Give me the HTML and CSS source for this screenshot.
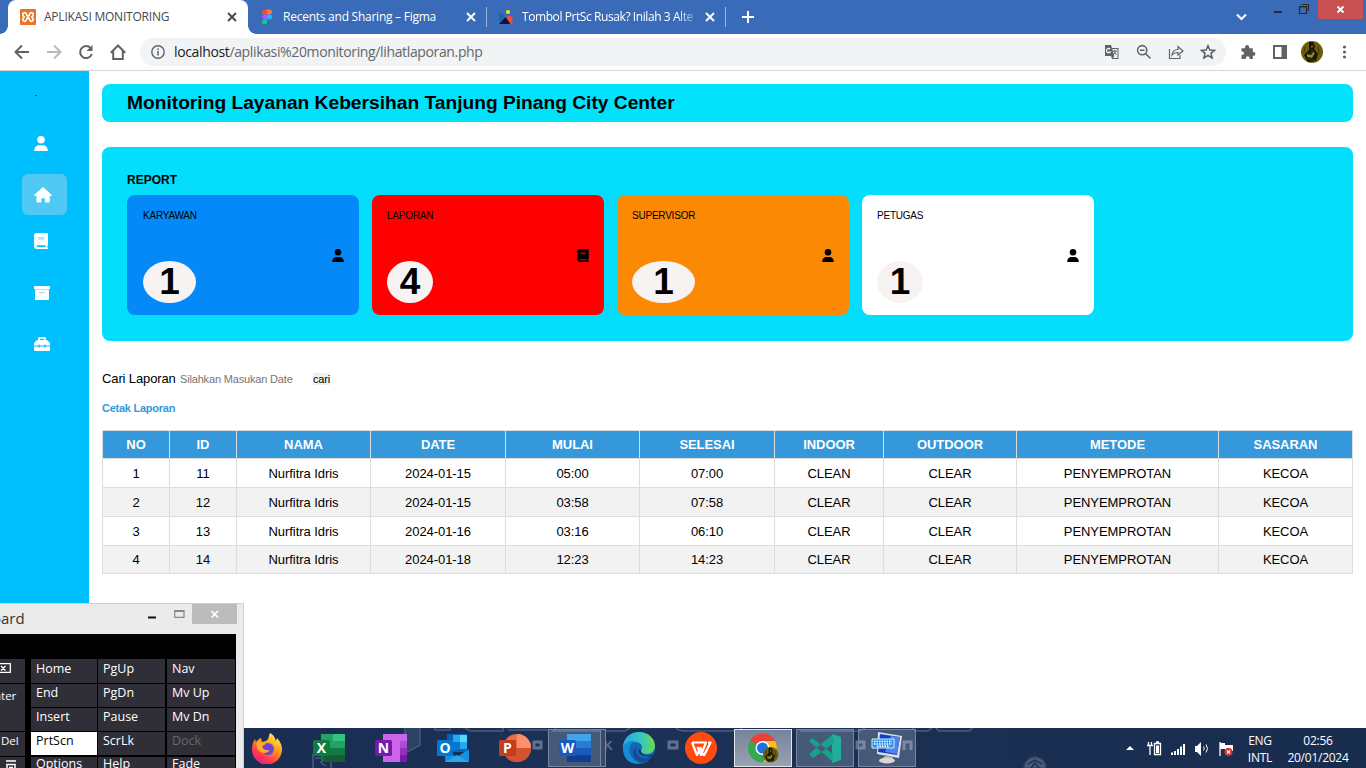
FILE: index.html
```html
<!DOCTYPE html>
<html lang="id">
<head>
<meta charset="utf-8">
<title>APLIKASI MONITORING</title>
<link rel="stylesheet" href="styles.css">
</head>
<body>
<svg class="defs" aria-hidden="true">
  <symbol id="x" viewBox="0 0 10 10"><path d="M1 1l8 8M9 1l-8 8" stroke="currentColor" stroke-width="1.9" fill="none"/></symbol>
  <symbol id="user" viewBox="0 0 14 15"><circle cx="7" cy="3.8" r="3.8"/><path d="M.2 15C.2 11 2.8 9.3 5 9.3h4c2.200 0 4.800 1.700 4.800 5.700z"/></symbol>
  <symbol id="book" viewBox="0 0 14 16"><path d="M2.600 0H13a1 1 0 0 1 1 1v11l-.6.600v1.600l.600.600V16H3a3 3 0 0 1-3-3V2.600A2.600 2.600 0 0 1 2.600 0z"/><path class="slit" d="M2.800 12.300h8.800v1.700H2.800z"/><path class="slot" d="M4.200 4h6.200v2.700H4.200z"/></symbol>
</svg>
<div class="screen">
  <header class="tabs">
    <div class="tab active">
      <svg class="fav" viewBox="0 0 16 16"><rect width="16" height="16" rx="1" fill="#e87424"/><path d="M4.500 3.600C7 3.300 6 7.200 8 7.200s1-3.900 3.500-3.600c2.500.4 2 3.200.4 4.400 1.600 1.200 2 4-.4 4.400C9 12.700 10 8.800 8 8.800s-1 3.900-3.500 3.600C2 12 2.500 9.200 4.100 8 2.500 6.800 2 4 4.500 3.600z" fill="none" stroke="#fff" stroke-width="1.700"/></svg>
      <span class="tab-title t1">APLIKASI MONITORING</span>
      <svg class="close"><use href="#x"/></svg>
    </div>
    <div class="tab">
      <svg class="fav" viewBox="0 0 16 16"><path d="M5.500.500H8v5H5.500a2.500 2.500 0 0 1 0-5z" fill="#f24e1e"/><path d="M8 .500h2.500a2.500 2.500 0 0 1 0 5H8z" fill="#ff7262"/><path d="M5.500 5.500H8v5H5.500a2.500 2.500 0 0 1 0-5z" fill="#a259ff"/><circle cx="10.500" cy="8" r="2.500" fill="#1abcfe"/><path d="M5.500 10.500H8V13a2.500 2.500 0 1 1-2.500-2.500z" fill="#0acf83"/></svg>
      <span class="tab-title t2">Recents and Sharing – Figma</span>
      <svg class="close"><use href="#x"/></svg>
    </div>
    <div class="tab third">
      <svg class="fav" viewBox="0 0 16 16"><path d="M1.500 3l5 4-5 6z" fill="#1565a9"/><path d="M11 6l3.500 2v7H12L8 9z" fill="#f04c38"/><path d="M7.500 8l5 7H1z" fill="#11133f"/><circle cx="10" cy="3" r="2.100" fill="#f6e316"/></svg>
      <span class="tab-title t3">Tombol PrtSc Rusak? Inilah 3 Alte</span>
      <svg class="close"><use href="#x"/></svg>
    </div>
    <svg class="plus" viewBox="0 0 12 12"><path d="M6 0v12M0 6h12" stroke="#fff" stroke-width="2"/></svg>
    <div class="winctl">
      <svg viewBox="0 0 140 34" width="140" height="34"><path d="M11 14.500l4.500 4.500 4.500-4.500" fill="none" stroke="#fff" stroke-width="2"/><path d="M48 11h8v2h-8z" fill="#2a2a2a"/><path d="M73.500 6.500h7V13.500h-7zM73 7h8M76 4.500h6.500V11" fill="none" stroke="#2a2a2a" stroke-width="1.200"/><path d="M92 0h45v19H92z" fill="#c75050"/><path d="M111.500 6.500l6 6m0-6l-6 6" stroke="#fff" stroke-width="1.800"/></svg>
    </div>
  </header>

  <nav class="toolbar">
    <span class="tool"><svg viewBox="0 0 16 16" class="line"><path d="M15 8H2M8 1.500L1.500 8 8 14.500"/></svg></span>
    <span class="tool off"><svg viewBox="0 0 16 16" class="line"><path d="M1 8h13M8 1.500L14.500 8 8 14.500"/></svg></span>
    <span class="tool"><svg viewBox="0 0 16 16" class="line"><path d="M13.800 10A6 6 0 1 1 12.700 4.200"/><path d="M14.500 1v6h-6z" fill="#5f6368" stroke="none"/></svg></span>
    <span class="tool"><svg viewBox="0 0 16 16" class="line"><path d="M.8 8.800L8 1.500l7.200 7.300M3.200 7v8h9.600V7"/></svg></span>
    <div class="omnibox">
      <svg viewBox="0 0 16 16" class="info"><circle cx="8" cy="8" r="6.200" fill="none" stroke="#5f6368" stroke-width="1.400"/><path d="M7.250 7h1.500v4.500h-1.500zM7.250 4.500h1.500V6h-1.500z"/></svg>
      <span class="url"><b>localhost</b>/aplikasi%20monitoring/lihatlaporan.php</span>
      <span class="tool"><svg viewBox="0 0 16 16"><path d="M1 1h6l1 3h6.500v11H8l-1-3H1z" fill="#5f6368"/><path d="M8.300 5h5.200v9H9.200l1-2.200z" fill="#f1f3f4"/><path d="M9 7h4m-2-1v1m-1.500 0l3 4m0-4l-3.500 4" stroke="#5f6368" stroke-width=".9" fill="none"/><path d="M6.200 5a2.200 2.200 0 1 0 .2 3H4.500" stroke="#fff" fill="none" stroke-width="1.100"/></svg></span>
      <span class="tool"><svg viewBox="0 0 16 16" class="line thin"><circle cx="6.200" cy="6.200" r="4.600"/><path d="M9.500 9.500l5 5M4 6.200h4.400"/></svg></span>
      <span class="tool"><svg viewBox="0 0 16 16" class="line fine"><path d="M1.500 5v9.500H12V11M4 11c.5-4 3-5.500 6-5.500V2.500l5 4.500-5 4V8.500C7 8.500 5.500 9 4 11z"/></svg></span>
      <span class="tool"><svg viewBox="0 0 16 16" class="line thin"><path d="M8 1.800l1.900 4.200 4.600.4-3.500 3 1.100 4.500L8 11.500l-4.100 2.400L5 9.400l-3.500-3 4.600-.4z"/></svg></span>
    </div>
    <span class="tool ext"><svg viewBox="0 0 16 16"><path d="M1.500 4.200h3.600V3a2 2 0 0 1 4 0v1.200h3.700V8h.7a1.900 1.900 0 0 1 0 3.800h-.7V15H9.600v-.8a1.900 1.900 0 0 0-3.800 0v.8H1.500v-4h.8a1.700 1.700 0 0 0 0-3.400h-.8z" fill="#5f6368"/></svg></span>
    <span class="tool"><svg viewBox="0 0 16 16"><path d="M1 1h14v14H1zM3 3v10h6.500V3z" fill-rule="evenodd" fill="#5f6368"/></svg></span>
    <span class="tool"><svg viewBox="0 0 22 22" class="avatar"><use href="#face"/></svg></span>
    <span class="tool"><svg viewBox="0 0 16 16"><circle cx="8.500" cy="3" r="1.600"/><circle cx="8.500" cy="8" r="1.600"/><circle cx="8.500" cy="13" r="1.600"/></svg></span>
  </nav>

  <div class="page">
    <aside class="side">
      <span class="speck"></span>
      <a class="s1"><svg width="14" height="15"><use href="#user"/></svg></a>
      <a class="on"><svg width="18" height="16" viewBox="0 0 18 16"><path d="M9 0l8.600 7.700c.5.500.2 1.200-.5 1.200h-1.300V14.600a1 1 0 0 1-1 1H11v-4.300H7.300v4.300H3.400a1 1 0 0 1-1-1V8.900H1C.2 8.900 0 8.200.4 7.700z"/></svg></a>
      <a class="s3"><svg width="14" height="16"><use href="#book"/></svg></a>
      <a class="s4"><svg width="16" height="14" viewBox="0 0 16 14"><path d="M.7 0h14.600a.7.7 0 0 1 .7.700V3H0V.7A.7.700 0 0 1 .7 0z"/><path d="M1 3h14v1H1z" class="slot"/><path d="M1 4h14v9a1 1 0 0 1-1 1H2a1 1 0 0 1-1-1z"/><path class="slot" d="M5.200 5.800h5.600v1.500H5.200z"/></svg></a>
      <a class="s5"><svg width="16" height="14" viewBox="0 0 16 14"><path fill-rule="evenodd" d="M4 3V1.500A1.500 1.500 0 0 1 5.500 0h5A1.500 1.500 0 0 1 12 1.500V3h1l3 3v2.500H0V6l3-3zm1.800-1.300V3h4.400V1.700z"/><path d="M0 9.500h16V13a1 1 0 0 1-1 1H1a1 1 0 0 1-1-1z"/><path d="M4.500 7.500h1.200v3.200H4.500zM10.300 7.500h1.200v3.200h-1.200z" fill="#00bfff"/></svg></a>
    </aside>
    <main>
      <h1>Monitoring Layanan Kebersihan Tanjung Pinang City Center</h1>
      <section class="report">
        <h2>REPORT</h2>
        <div class="cards">
          <div class="card blue"><div class="stat"><span>KARYAWAN</span><strong>1</strong></div><svg width="12" height="13"><use href="#user"/></svg></div>
          <div class="card red"><div class="stat s2"><span>LAPORAN</span><strong>4</strong></div><svg width="12" height="13"><use href="#book"/></svg></div>
          <div class="card orange"><div class="stat s3"><span>SUPERVISOR</span><strong>1</strong></div><svg width="12" height="13"><use href="#user"/></svg></div>
          <div class="card white"><div class="stat s2"><span>PETUGAS</span><strong>1</strong></div><svg width="12" height="13"><use href="#user"/></svg></div>
        </div>
      </section>
      <div class="search"><span class="lbl">Cari Laporan</span><span class="hint">Silahkan Masukan Date</span><span class="go">cari</span></div>
      <a class="print">Cetak Laporan</a>
      <table>
        <colgroup><col class="c1"><col class="c2"><col class="c3"><col class="c4"><col class="c5"><col class="c6"><col class="c7"><col class="c8"><col class="c9"><col class="c10"></colgroup>
        <thead><tr><th>NO</th><th>ID</th><th>NAMA</th><th>DATE</th><th>MULAI</th><th>SELESAI</th><th>INDOOR</th><th>OUTDOOR</th><th>METODE</th><th>SASARAN</th></tr></thead>
        <tbody>
          <tr><td>1</td><td>11</td><td>Nurfitra Idris</td><td>2024-01-15</td><td>05:00</td><td>07:00</td><td>CLEAN</td><td>CLEAR</td><td>PENYEMPROTAN</td><td>KECOA</td></tr>
          <tr><td>2</td><td>12</td><td>Nurfitra Idris</td><td>2024-01-15</td><td>03:58</td><td>07:58</td><td>CLEAR</td><td>CLEAR</td><td>PENYEMPROTAN</td><td>KECOA</td></tr>
          <tr><td>3</td><td>13</td><td>Nurfitra Idris</td><td>2024-01-16</td><td>03:16</td><td>06:10</td><td>CLEAR</td><td>CLEAR</td><td>PENYEMPROTAN</td><td>KECOA</td></tr>
          <tr><td>4</td><td>14</td><td>Nurfitra Idris</td><td>2024-01-18</td><td>12:23</td><td>14:23</td><td>CLEAR</td><td>CLEAR</td><td>PENYEMPROTAN</td><td>KECOA</td></tr>
        </tbody>
      </table>
    </main>
  </div>

  <footer class="taskbar">
    <svg class="wall" viewBox="0 0 1366 40" width="1366" height="40">
      <g fill="none" stroke="#4a5c7c" stroke-width="1.500"><path d="M405 0v25l15-8V0M435 0v2h15V0M465 0l5 3h33V0M508 2h40M556 0l-3 3h72l5-3M676 0c2 3 8 3 12 3h50l4-3M800 3h60l5-3M912 0l4 3h12l4-3M936 0l3 3h30l4-3"/><path d="M313 26v14M315 30h16v10M320 34l6 4"/></g>
      <path d="M406 0v24l13-8V0z" fill="#2e4266"/>
      <g fill="none" stroke="#5f7091" stroke-width="3"><path d="M534 14h7v6h-7zM669 14h8v6h-8zM857 14h7v6h-7zM904 22v-8h7v8"/></g>
      <g class="wall-text"><text x="604" y="22">K</text><text x="735" y="22">T</text><text x="781" y="22">E</text></g>
      <path d="M1024 40a11 11 0 0 1 22 0z" fill="#4a5c7c" stroke="#2f4469" stroke-width="2" stroke-dasharray="1 1"/><path d="M1028 36l7-4 7 4M1031 40l4-5 4 5" fill="none" stroke="#1b3055" stroke-width="1.500"/>
    </svg>
    <div class="apps">
      <span class="app"><svg viewBox="0 0 32 32"><defs><linearGradient id="ff" x1=".8" y1="0" x2=".2" y2="1"><stop offset="0" stop-color="#fff44f"/><stop offset=".4" stop-color="#ff9a1f"/><stop offset=".75" stop-color="#ff3750"/><stop offset="1" stop-color="#e21b9a"/></linearGradient></defs><path d="M19 1c4 2 5 5 6 8l1-3c3 3 5 7 5 11a15 15 0 0 1-30 1C1 13 2 10 4 7l1 3c1-2 3-3 5-4l1 4c3-1 5-1 6-3 1-2 1-4 2-6z" fill="url(#ff)"/><circle cx="17" cy="17" r="6" fill="#6b45d5"/><path d="M6 10c4-1 7 0 9 2l-4 2c1 4 4 5 8 4-2 3-6 4-9 2-4-2-5-6-4-10z" fill="#ffae26"/></svg></span>
      <span class="app"><svg viewBox="0 0 32 32"><path d="M8 2h24v28H8z" fill="#21a366"/><path d="M20 2h12v7H20z" fill="#33c481"/><path d="M8 16h12v14H8zM20 16h12v7H20z" fill="#107c41"/><path d="M10 23h22v7H10z" fill="#185c37"/><rect y="8" width="17" height="16" rx="1.500" fill="#107c41"/><text x="8.500" y="21">X</text></svg></span>
      <span class="app"><svg viewBox="0 0 32 32"><path d="M8 2h24v28H8z" fill="#ca64ea"/><path d="M25 9h7v7h-7z" fill="#ae4bd5"/><path d="M25 16h7v7h-7z" fill="#9332bf"/><path d="M25 23h7v7h-7z" fill="#7719aa"/><rect y="8" width="17" height="16" rx="1.500" fill="#7719aa"/><text x="8.500" y="21">N</text></svg></span>
      <span class="app"><svg viewBox="0 0 32 32"><path d="M10 2h20v18H10z" fill="#0364b8"/><path d="M16 3h7v7h-7zM23 10h7v7h-7z" fill="#28a8ea"/><path d="M23 3h7v7h-7z" fill="#50d9ff"/><path d="M10 10h13v8H10z" fill="#0078d4"/><path d="M8 18l12 7 12-8v13H8z" fill="#1490df"/><path d="M8 30l12-7 12 7z" fill="#28a8ea"/><rect y="8" width="16" height="16" rx="1.500" fill="#0078d4"/><text x="8" y="21">O</text></svg></span>
      <span class="app"><svg viewBox="0 0 32 32"><circle cx="18" cy="16" r="14" fill="#ed6c47"/><path d="M18 2a14 14 0 0 1 14 14H18z" fill="#ff8f6b"/><path d="M4 16h28a14 14 0 0 1-28 0z" fill="#d35230"/><rect y="8" width="17" height="16" rx="1.500" fill="#c43e1c"/><text x="8.500" y="21">P</text></svg></span>
      <span class="app open stack"><svg viewBox="0 0 32 32"><path d="M8 2h24v7H8z" fill="#41a5ee"/><path d="M8 9h24v7H8z" fill="#2b7cd3"/><path d="M8 16h24v7H8z" fill="#185abd"/><path d="M8 23h24v7H8z" fill="#103f91"/><rect y="8" width="17" height="16" rx="1.500" fill="#185abd"/><text x="8.500" y="21">W</text></svg></span>
      <span class="app"><svg viewBox="0 0 32 32"><defs><linearGradient id="eg"><stop offset="0" stop-color="#24a8e8"/><stop offset=".55" stop-color="#36c6c2"/><stop offset="1" stop-color="#68dd45"/></linearGradient></defs><circle cx="16" cy="16" r="16" fill="#1268b8"/><path d="M0 14C1 6 7 0 16 0c10 0 16 7 16 14 0 5-4 8-8 8-3 0-6-1-6-3 0-1 1-2 1-4 0-3-3-5-7-5-6 0-11 3-12 8z" fill="url(#eg)"/><path d="M0 17c0-5 6-9 12-8-5 2-7 7-5 13 2 5 6 8 11 9-10 3-18-4-18-14z" fill="#168bd6"/><path d="M14 15c-4 8 6 15 15 9-2 3-4 5-7 6-7 1-13-4-12-10 0-2 2-4 4-5z" fill="#154c91"/><path d="M17.500 17c0 7 7 8 13 5l-1 2c-8 2-14-2-14-5 0-1 1-2 2-2zM28 26l4-4v10h-9z" fill="#1a2f53"/></svg></span>
      <span class="app"><svg viewBox="0 0 32 32"><circle cx="16" cy="16" r="16" fill="#ff4a10"/><path d="M7 10.500h14L16 23l-3.500-8M7 10.500L12 23l3-7M15 15l3.500 8h.8L25.500 10.500H23" fill="none" stroke="#fff" stroke-width="2.200" stroke-linejoin="round"/></svg></span>
      <span class="app open current"><svg viewBox="0 0 32 32"><circle cx="15.500" cy="16" r="14.500" fill="#34a853"/><path d="M15.500 16L3 8.600A14.500 14.500 0 0 1 28 8.600L30 16z" fill="#ea4335"/><path d="M15.500 9H28c5 8-1 21-12 21.500L22 20z" fill="#fbc116"/><circle cx="15.500" cy="16" r="7" fill="#fff"/><circle cx="15.500" cy="16" r="5.500" fill="#1a73e8"/><g id="face" transform="translate(16 15) scale(.7)"><circle cx="11" cy="11" r="11" fill="#6b6008"/><path d="M8 1h4l2 4-1 3 4 5-2 7-8 1-4-7 5-5z" fill="#171608"/><path d="M11 4l1 1-1 2-1-1zM6 13l4 1 2-3 2 1-3 5-5-1z" fill="#9b851d"/><path d="M10 8l2 2-3 3M7 18l7 1M17 5l1 8M4 6l-1 5" stroke="#3d380b" fill="none"/></g></svg></span>
      <span class="app open"><svg viewBox="0 0 32 32"><path d="M23 2l9 3v23l-9 3z" fill="#25ad9c"/><path d="M24 2L0 22l4 4 21-15zM0 9l3-3 21 16v8z" fill="#17a28c"/></svg></span>
      <span class="app open"><svg viewBox="0 0 32 32"><path d="M7 0l24 4-3 22-22-4z" fill="#dce2ec"/><path d="M9 2l20 3-3 18-19-3z" fill="#123fc0"/><path d="M20 4l9 1-3 17-12-2z" fill="#4f83e8"/><path d="M15 23l7 2-1 4H9z" fill="#aaa"/><ellipse cx="16" cy="28.500" rx="8" ry="3" fill="#d8d8d5"/><path d="M1 7h22v9H1z" fill="#3292e0" stroke="#d5efff"/><path d="M3 9.500h18M3 12h18M6 14.300h12" stroke="#fff" stroke-width="1.400" stroke-dasharray="1.500 1"/></svg></span>
    </div>
    <div class="tray">
      <svg viewBox="0 0 110 20" width="110" height="20"><path d="M3 12h8L7 8z" fill="#fff"/><g fill="none" stroke="#fff" stroke-width="1.300"><path d="M31.500 5.500h6v11h-6zM33 4h3M25.500 4v3M28.500 4v3M24 7.500h6M27 8v9"/></g><path d="M33 7.500h3V15h-3z" fill="#fff"/><path d="M48 14.500h2V17h-2zM51 13h2v4h-2zM54 11h2v6h-2zM57 8.500h2V17h-2zM60 6h2v11h-2zM72 8h2l4-4v14l-4-4h-2zM97 5h5v6h-5zM102 7h8v6h-8z" fill="#fff"/><path d="M80.500 8.500q1.500 2 0 4M83 6.500q3 4 0 8" fill="none" stroke="#fff"/><path d="M97 4v14" stroke="#fff" stroke-width="1.300"/><circle cx="105.500" cy="14" r="4" fill="#d93025"/><path d="M103.800 12.300l3.400 3.400m0-3.400l-3.400 3.400" stroke="#fff" stroke-width="1.200"/></svg>
      <div class="lang"><span>ENG</span><span>INTL</span></div>
      <div class="clock"><span>02:56</span><span>20/01/2024</span></div>
    </div>
  </footer>

  <section class="osk">
    <div class="osk-title"><span>oard</span><svg viewBox="0 0 90 30" width="90" height="30"><path d="M0 12.500h8v2H0z" fill="#111"/><path d="M26.700 6.700h9.300v6.600h-9.300zM26.700 7.500H36" fill="none" stroke="#888" stroke-width="1.200"/><path d="M44 0h45v20H44z" fill="#bcbcbc"/><path d="M63.500 7l6.500 6.500M70 7l-6.500 6.500" stroke="#fff" stroke-width="1.700"/></svg></div>
    <div class="osk-body">
      <div class="frag">
        <span class="key"><svg viewBox="0 0 12 10" width="12" height="10"><path d="M0 .7h10.300v8.600H0M1 3l4.500 4.500M5.500 3L1 7.500" fill="none" stroke="#fff" stroke-width="1.300"/></svg></span>
        <span class="key enter">nter</span>
        <span class="key del">Del</span>
        <span class="key menu"><svg viewBox="0 0 10 11" width="10" height="11"><path d="M0 1h10M1 4.500h8V11H1zM3 7.500h4" fill="none" stroke="#fff" stroke-width="1.500"/></svg></span>
      </div>
      <div class="grid">
        <span class="key">Home</span><span class="key">PgUp</span><span class="key">Nav</span>
        <span class="key">End</span><span class="key">PgDn</span><span class="key">Mv Up</span>
        <span class="key">Insert</span><span class="key">Pause</span><span class="key">Mv Dn</span>
        <span class="key lit">PrtScn</span><span class="key">ScrLk</span><span class="key dim">Dock</span>
        <span class="key last">Options</span><span class="key last">Help</span><span class="key last">Fade</span>
      </div>
    </div>
  </section>
</div>
</body>
</html>
```
FILE: styles.css
```css
* { box-sizing: border-box; }
body { margin: 0; overflow: hidden; font-family: "Liberation Sans", Arial, sans-serif; }
svg { display: block; flex: none; }
.defs { position: absolute; width: 0; height: 0; }
.screen { position: relative; display: flex; flex-direction: column; width: 1366px; height: 768px; overflow: hidden; background: #fff; }

/* browser tabs */
.tabs { display: flex; align-items: center; height: 34px; padding-left: 8px; background: #396bb8; font-family: "Open Sans", "Noto Sans", sans-serif; }
.tab { display: flex; align-items: center; width: 239px; height: 34px; padding-left: 11px; padding-right: 11px; color: #fff; }
.tab.active { position: relative; width: 240px; padding-left: 12px; background: #fff; color: #45494d; border-radius: 8px 8px 0 0; }
.tab.active::before, .tab.active::after { content: ""; position: absolute; bottom: 0; width: 8px; height: 8px; }
.tab.active::before { left: -8px; background: radial-gradient(circle at 0 0, transparent 7.5px, #fff 8px); }
.tab.active::after { right: -8px; background: radial-gradient(circle at 100% 0, transparent 7.5px, #fff 8px); }
.tab:not(.active) { position: relative; }
.tab:not(.active)::after { content: ""; position: absolute; right: 0; top: 7px; width: 1px; height: 20px; background: #9bb5dc; }
.fav { width: 16px; height: 16px; margin-right: 8px; }
.tab-title { flex: 1; white-space: nowrap; font-size: 12px; line-height: 20px; }
.t1 { letter-spacing: -.22px; }
.t2 { letter-spacing: -.25px; }
.t3 { width: 176px; flex: none; margin-right: 7px; letter-spacing: -.42px; -webkit-mask-image: linear-gradient(90deg, #000 88%, transparent 103%); mask-image: linear-gradient(90deg, #000 88%, transparent 103%); }
.close { width: 10px; height: 10px; }
.plus { width: 12px; height: 12px; margin-left: 16px; }
.winctl { margin-left: auto; }

/* browser toolbar */
.toolbar { display: flex; align-items: center; height: 37px; padding-left: 6px; border-bottom: 1px solid #d6d6d6; }
.tool { display: flex; align-items: center; justify-content: center; width: 32px; height: 28px; fill: #5f6368; }
.tool svg { width: 16px; height: 16px; }
.tool .avatar { width: 22px; height: 22px; overflow: visible; }
.avatar use { transform: scale(1.43) translate(-16px, -15px); }
.line { fill: none; stroke: #5f6368; stroke-width: 2; }
.off .line { stroke: #b8babd; }
.line.thin { stroke-width: 1.6; }
.line.fine { stroke-width: 1.2; }
.omnibox { display: flex; align-items: center; width: 1086px; height: 28px; margin-left: 6px; padding: 0 2px 0 10px; border-radius: 14px; background: #f1f3f4; }
.info { width: 16px; height: 16px; fill: #5f6368; }
.url { flex: 1; margin-left: 8px; font: 14px/20px "Open Sans", "Noto Sans", sans-serif; letter-spacing: -.36px; color: #63676b; white-space: nowrap; }
.url b { font-weight: 400; color: #202124; }
.ext { margin-left: 6px; }

/* page */
.page { display: flex; flex: 1; min-height: 0; }
.slot { fill: var(--slot); }
.slit { fill: var(--slit); }
.side { --slot: #a9e6fd; --slit: #00bfff; display: flex; flex-direction: column; width: 89px; padding: 24px 22px 0; background: #00bfff; fill: #fff; }
.speck { width: 2px; height: 1px; margin: 0 0 27px 13px; background: #066a8d; }
.side a { display: flex; align-items: center; width: 45px; height: 41px; margin-bottom: 10px; padding-left: 12px; border-radius: 6px; }
.side .s1, .side .s3 { padding-bottom: 1px; }
.side .on { background: #4fc9f4; margin-bottom: 6px; }
.side .s4, .side .s5 { padding-top: 1px; }
main { flex: 1; padding: 13px 13px 0; }
h1, h2 { margin: 0; }
h1 { height: 38px; padding-left: 25px; border-radius: 8px; background: #02e2fb; font-size: 19.2px; line-height: 37px; white-space: nowrap; }
.report { height: 194px; margin-top: 25px; padding: 26px 25px 25px; border-radius: 8px; background: #04defc; }
h2 { font-size: 12px; line-height: 15px; font-weight: 700; }
.cards { display: flex; gap: 13px; margin-top: 7px; }
.card { --slot: #a90000; --slit: #a90000; display: flex; align-items: center; justify-content: space-between; width: 232px; height: 120px; padding: 0 15px; border-radius: 8px; }
.blue { background: #0589f8; } .red { background: #fe0000; } .orange { background: #fb8904; } .white { background: #fff; }
.card.blue { padding-left: 16px; }
.stat { display: flex; flex-direction: column; justify-content: space-between; width: 53px; height: 96px; margin-top: 1px; font-size: 10px; line-height: 16px; letter-spacing: -.22px; white-space: nowrap; }
.stat.s2 { width: 46px; } .stat.s3 { width: 63px; }
.stat strong { display: block; width: 100%; height: 42px; margin-bottom: 1px; border-radius: 50%; background: #f7f3f3; text-align: center; font-size: 37px; line-height: 42px; letter-spacing: 0; }
.search { display: flex; align-items: baseline; height: 20px; margin-top: 28px; line-height: 20px; white-space: nowrap; }
.lbl { width: 78px; font-size: 13px; letter-spacing: -.12px; }
.hint { width: 133px; font-size: 11px; letter-spacing: -.17px; color: #757575; }
.go { font-size: 11px; line-height: 12px; letter-spacing: -.15px; background: #efefef; }
.print { display: block; margin-top: 12px; font-size: 11px; line-height: 14px; letter-spacing: -.25px; font-weight: 700; color: #3498db; }
table { width: 1251px; margin-top: 15px; border-collapse: collapse; table-layout: fixed; font-size: 13px; letter-spacing: -.06px; }
th, td { height: 29px; padding: 0; border: 1px solid #ddd; text-align: center; line-height: 15px; white-space: nowrap; }
th { height: 28px; background: #3498db; color: #fff; }
tbody tr:nth-child(even) { background: #f2f2f2; }
tbody tr:last-child td { height: 28px; }
.c1, .c2 { width: 67px; } .c3 { width: 134px; } .c4 { width: 135px; } .c5 { width: 134px; } .c6 { width: 135px; } .c7 { width: 109px; } .c8 { width: 133px; } .c9 { width: 202px; } .c10 { width: 134px; }

/* taskbar */
.taskbar { position: relative; display: flex; align-items: center; height: 40px; padding-left: 238px; background: linear-gradient(90deg, #182c50, #1b3155 50%, #182c4e); }
.wall { position: absolute; left: 0; top: 0; }
.wall-text { fill: #5f7091; font: 700 12px "Liberation Sans", sans-serif; }
.apps, .tray { position: relative; display: flex; align-items: center; }
.apps { gap: 4px; }
.app { display: flex; align-items: center; justify-content: center; width: 58px; height: 38px; }
.app svg { width: 32px; height: 32px; }
.app text { fill: #fff; font: 700 14px "Open Sans", sans-serif; text-anchor: middle; }
.open { background: rgba(200, 210, 230, .25); border: 1px solid #7885a0; }
.stack { padding-right: 4px; box-shadow: inset -4px 0 #3a4a6b, inset -5px 0 #7885a0; }
.current { background: linear-gradient(#77839a, #9aa2b1); border-color: #e4e7ec; }
.tray { margin-left: auto; color: #fff; font: 12px/17px "Open Sans", "Noto Sans", sans-serif; }
.tray svg { overflow: visible; }
.lang, .clock { display: flex; flex-direction: column; align-items: center; padding-top: 2px; letter-spacing: -.25px; }
.lang { width: 40px; margin-left: 7px; }
.clock { width: 76px; margin-right: 10px; }

/* on-screen keyboard window */
.osk { position: absolute; left: 0; top: 603px; width: 244px; height: 165px; border: solid #cfcfcf; border-width: 1px 1px 0 0; background: #ebebeb; font-family: "Open Sans", "Noto Sans", sans-serif; overflow: hidden; }
.osk-title { display: flex; justify-content: space-between; height: 30px; padding-right: 5px; color: #333; font-size: 15px; line-height: 29px; }
.osk-title span { margin-left: -8px; }
.osk-body { display: flex; width: 236px; height: 134px; padding-top: 25px; background: #000; color: #fff; font-size: 12.5px; line-height: 17px; }
.frag { display: flex; flex-direction: column; gap: 1px; width: 25px; margin-right: 6px; font-size: 11.5px; }
.key { flex: none; height: 24px; padding-left: 5px; background: #302e37; white-space: nowrap; }
.frag .key { padding: 4px 0 0; }
.frag .enter { height: 47px; padding: 3px 0 0; text-indent: -6px; }
.frag .del { padding: 0 0 0 1px; }
.frag .menu { padding: 3px 0 0 6px; }
.grid { display: grid; grid-template-columns: 66px 67px 69px; grid-template-rows: 24px 23px 23px 23px 24px; column-gap: 1px; row-gap: 1px; }
.grid .key { height: auto; }
.grid .key:nth-child(-n+3) { line-height: 19px; }
.grid .key:nth-child(3n) { margin-left: 1px; }
.grid .last { margin-top: 1px; line-height: 14px; }
.lit { background: #fff; color: #000; }
.dim { color: #68666e; }
```
